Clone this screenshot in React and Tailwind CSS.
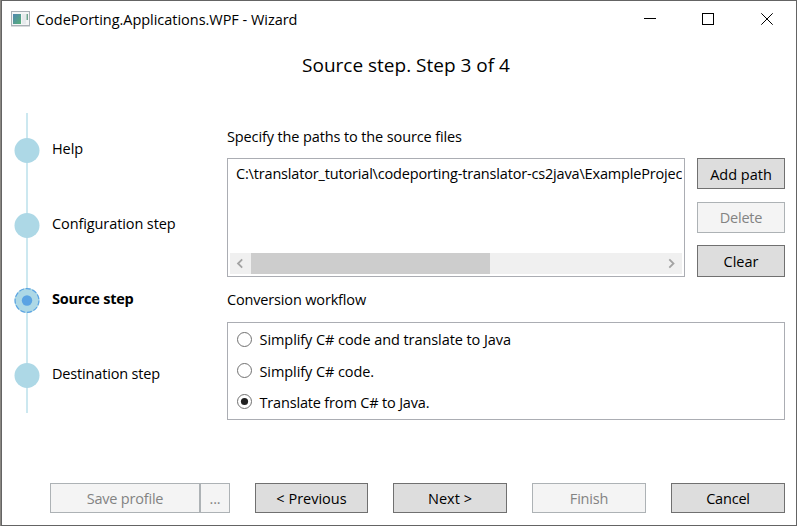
const STEPS = [
  { label: "Help", text: "tracking-[-0.1px]" },
  { label: "Configuration step", text: "tracking-[-0.1px]" },
  { label: "Source step", text: "tracking-[-0.24px] font-bold", active: true },
  { label: "Destination step", text: "tracking-[-0.17px]" },
];

const WORKFLOWS = [
  { label: "Simplify C# code and translate to Java", text: "tracking-[-0.07px]" },
  { label: "Simplify C# code.", text: "tracking-[-0.08px] pt-[2px]" },
  { label: "Translate from C# to Java.", text: "tracking-[-0.17px] pt-[2px]", checked: true },
];

function Button({ children, disabled, className = "" }) {
  const tone = disabled
    ? "border-[#adb2b5] bg-[#f4f4f4] text-[#838383] tracking-[-0.2px]"
    : "border-[#707070] bg-[#dddddd] text-black";
  return (
    <button
      type="button"
      disabled={disabled}
      className={`flex shrink-0 items-center justify-center border pt-[2px] whitespace-pre ${tone} ${className}`}
    >
      {children}
    </button>
  );
}

function AppIcon() {
  return (
    <svg width="19" height="16" viewBox="0 0 19 16" className="shrink-0">
      <defs>
        <linearGradient id="screen" x1="0" y1="0" x2="1" y2="1">
          <stop offset="0" stopColor="#4f86b0" />
          <stop offset="1" stopColor="#58b078" />
        </linearGradient>
      </defs>
      <rect x="0.5" y="0.5" width="18" height="14" fill="#f4f5f6" stroke="#a9b0b6" />
      <path d="M0 15.5H19" stroke="#d8dadc" />
      <rect x="2" y="3" width="8" height="10" fill="url(#screen)" />
      <rect x="11" y="3" width="4" height="10" fill="#e6eaec" />
      <rect x="15.5" y="3" width="1.5" height="6" fill="#6fa58f" />
    </svg>
  );
}

function StepMarker({ active }) {
  return (
    <svg width="26" height="26" viewBox="0 0 26 26" className="relative shrink-0">
      <circle cx="13" cy="12.5" r="12.5" fill="#add8e6" />
      {active && (
        <>
          <circle cx="13" cy="12.5" r="11.9" fill="none" stroke="#5ba3e3" strokeWidth="1.2" strokeDasharray="5 1.8" />
          <circle cx="13" cy="12.5" r="5.2" fill="#5ba3e3" />
        </>
      )}
    </svg>
  );
}

export default function App() {
  return (
    <div className="h-[526px] w-[797px] overflow-hidden bg-[#8a8782] pl-px font-['Open_Sans','Noto_Sans',sans-serif] text-[14.5px] leading-[20px] text-black">
      <div className="flex h-full flex-col border border-[#646464] bg-white">
        <header className="flex h-[36px] shrink-0 items-center pr-[23px] pl-[9px]">
          <AppIcon />
          <span className="ml-[6px] pt-[2px] tracking-[-0.03px] whitespace-nowrap">CodePorting.Applications.WPF - Wizard</span>
          <svg width="130" height="12" viewBox="0 0 130 12" className="ml-auto" fill="none" stroke="#000">
            <path d="M1 5.5H13" />
            <rect x="59.5" y="0.5" width="11" height="11" />
            <path d="M118.3 0.3L129.7 11.7M129.7 0.3L118.3 11.7" />
          </svg>
        </header>

        <h1 className="h-[76px] shrink-0 pt-[14px] pl-[14px] text-center text-[19px] leading-[28px]">
          Source step. Step 3 of 4
        </h1>

        <main className="flex h-[342px] shrink-0 pr-[10px] pl-[12px]">
          <ol className="grid h-[300px] w-[213px] shrink-0 grid-rows-4">
            {STEPS.map((step) => (
              <li key={step.label} className="grid h-[75px] grid-cols-[26px_1fr] items-center">
                <div className="col-start-1 row-start-1 h-full w-[2px] justify-self-center bg-[#cce8f0]" />
                <div className="col-start-1 row-start-1 flex">
                  <StepMarker active={step.active} />
                </div>
                <span className={`row-start-1 pb-[3px] pl-[12px] whitespace-nowrap ${step.text}`}>{step.label}</span>
              </li>
            ))}
          </ol>

          <div className="flex w-[558px] flex-col">
            <h2 className="h-[45px] pt-[14px] tracking-[-0.12px]">Specify the paths to the source files</h2>
            <div className="flex h-[119px] gap-[12px]">
              <div className="flex w-[458px] flex-col border border-[#abadb3] px-[2px] pb-[2px]">
                <div className="flex-1 overflow-hidden pt-[5px] pl-[6px] tracking-[-0.17px] whitespace-nowrap">
                  C:\translator_tutorial\codeporting-translator-cs2java\ExampleProjec
                </div>
                <div className="flex h-[21px] items-center bg-[#f0f0f0]">
                  <svg width="21" height="21" viewBox="0 0 21 21" fill="none" stroke="#a3a3a3" strokeWidth="1.8">
                    <path d="M12.2 6.3L8 10.5L12.2 14.7" />
                  </svg>
                  <div className="h-full w-[239px] bg-[#cdcdcd]" />
                  <svg width="21" height="21" viewBox="0 0 21 21" className="ml-auto" fill="none" stroke="#a3a3a3" strokeWidth="1.8">
                    <path d="M8.3 6.3L12.5 10.5L8.3 14.7" />
                  </svg>
                </div>
              </div>
              <div className="flex w-[88px] flex-col justify-between">
                <Button className="h-[31px]">Add path</Button>
                <Button className="h-[31px]" disabled>Delete</Button>
                <Button className="h-[32px]">Clear</Button>
              </div>
            </div>
            <h2 className="h-[45px] pt-[13px] tracking-[-0.16px]">Conversion workflow</h2>
            <div className="flex h-[98px] flex-col border border-[#abadb3] pt-[1px] pl-[9px]">
              {WORKFLOWS.map((item) => (
                <label key={item.label} className="flex h-[31px] items-center">
                  <svg width="15" height="15" viewBox="0 0 15 15" className="shrink-0">
                    <circle cx="7.5" cy="7.5" r="7" fill="#fff" stroke="#707070" />
                    {item.checked && <circle cx="7.5" cy="7.5" r="3.6" fill="#212121" />}
                  </svg>
                  <span className={`pl-[7.5px] whitespace-nowrap ${item.text}`}>{item.label}</span>
                </label>
              ))}
            </div>
          </div>
        </main>

        <footer className="flex shrink-0 pt-[28px] pl-[48px]">
          <Button className="h-[30px] w-[150px]" disabled>Save profile</Button>
          <Button className="h-[30px] w-[30px]" disabled>...</Button>
          <Button className="ml-[25px] h-[30px] w-[113px]">{"< Previous"}</Button>
          <Button className="ml-[25px] h-[30px] w-[114px]">{"Next >"}</Button>
          <Button className="ml-[25px] h-[30px] w-[114px]" disabled>Finish</Button>
          <Button className="ml-[25px] h-[30px] w-[114px] tracking-[-0.2px]">Cancel</Button>
        </footer>
      </div>
    </div>
  );
}
